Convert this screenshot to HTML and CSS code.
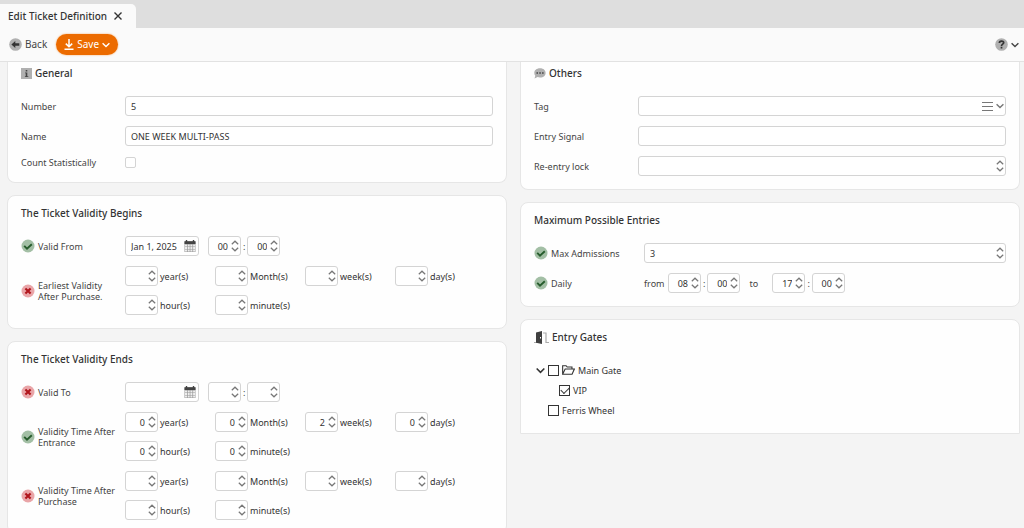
FILE: index.html
```
<!DOCTYPE html>
<html lang="en">

<head>
    <meta charset="UTF-8">
    <meta name="viewport" content="width=device-width, initial-scale=1.0">
    <title>Edit Ticket Definition</title>
    <link rel="stylesheet" href="styles.css">
</head>

<body>
    <!-- Shared icons -->
    <svg class="sprite" aria-hidden="true">
        <symbol id="i-spin" viewBox="0 0 8 12">
            <path d="M.8 4.300 4 1.200l3.200 3.100M.8 7.700 4 10.800l3.200-3.100" fill="none" stroke="#777" stroke-width="1.200" />
        </symbol>
        <symbol id="i-down" viewBox="0 0 8 6">
            <path d="M.6 1.200 4 4.600l3.400-3.400" fill="none" stroke="currentColor" stroke-width="1.400" />
        </symbol>
        <symbol id="i-ok" viewBox="0 0 14 14">
            <circle cx="7" cy="7" r="6.5" fill="#a3bfa5" />
            <path d="M3.2 6.8 6 9.6l4.8-4.4" fill="none" stroke="#265c2c" stroke-width="1.9" />
        </symbol>
        <symbol id="i-no" viewBox="0 0 14 14">
            <circle cx="7" cy="7" r="6.5" fill="#e9a5a8" />
            <path d="m4.4 4.4 5.2 5.2m0-5.2L4.4 9.6" fill="none" stroke="#b0151c" stroke-width="2.1" />
        </symbol>
        <symbol id="i-cal" viewBox="0 0 12 12">
            <path d="M.5 1.500h11V12H.5z" fill="#999" />
            <path d="M.5 1.200h11v2.800H.5z" fill="#444" />
            <path d="M2.5 0v2.4M9.5 0v2.4" stroke="#444" stroke-width="1.4" />
            <path d="M1 4.600h2v1.800H1zM3.700 4.600h2v1.800h-2zM6.400 4.600h2v1.800h-2zM9.100 4.600h2v1.800h-2zM1 7.100h2v1.800H1zM3.700 7.100h2v1.800h-2zM6.400 7.100h2v1.800h-2zM9.100 7.100h2v1.800h-2zM1 9.600h2v1.800H1zM3.700 9.600h2v1.800h-2zM6.400 9.600h2v1.800h-2zM9.100 9.600h2v1.800h-2z" fill="#eee" />
        </symbol>
    </svg>

    <header class="tab-bar">
        <div class="tab">
            <span>Edit Ticket Definition</span>
            <button class="icon-button" aria-label="Close">
                <svg width="8" height="8" viewBox="0 0 8 8"><path d="m.5.5 7 7m0-7-7 7" stroke="#333" stroke-width="1.4" /></svg>
            </button>
        </div>
    </header>

    <nav class="toolbar">
        <button class="back">
            <svg width="13" height="13" viewBox="0 0 13 13"><circle cx="6.5" cy="6.5" r="6.3" fill="#b0b0b0" /><path d="M2.4 6.5 6.3 3v2.3h4v2.4h-4V10z" fill="#333" /></svg>
            Back
        </button>
        <button class="save">
            <svg width="10" height="11" viewBox="0 0 10 11"><path d="M5 0v7.5M1.8 4.6 5 7.8l3.2-3.2M.5 10.2h9" fill="none" stroke="#fff" stroke-width="1.5" /></svg>
            Save
            <svg width="8" height="6"><use href="#i-down" /></svg>
        </button>
        <button class="help" aria-label="Help">
            <svg width="13" height="13" viewBox="0 0 13 13"><circle cx="6.5" cy="6.5" r="6.3" fill="#b0b0b0" /><path d="M4.4 5c0-2.6 4.3-2.5 4.3-.3C8.7 6.2 6.5 6.1 6.5 7.900M6.500 8.800v1.700" fill="none" stroke="#333" stroke-width="1.700" /></svg>
            <svg width="8" height="6"><use href="#i-down" /></svg>
        </button>
    </nav>

    <main class="content">
        <div class="column">
            <section class="panel panel-first">
                <h2>
                    <svg width="11" height="11" viewBox="0 0 11 11"><path d="M0 0h11v11H0z" fill="#b0b0b0" /><path d="M4.7 2h1.600v1.500H4.700zM4 4.500h2.300v3.700h1V9H3.900v-.8h.8V5.300H4z" fill="#444" /></svg>
                    General
                </h2>
                <div class="row">
                    <label class="label" for="number">Number</label>
                    <input class="text" id="number" type="text" value="5">
                </div>
                <div class="row">
                    <label class="label" for="name">Name</label>
                    <input class="text" id="name" type="text" value="ONE WEEK MULTI-PASS">
                </div>
                <div class="row row-check">
                    <label class="label" for="stat">Count Statistically</label>
                    <input class="check" id="stat" type="checkbox">
                </div>
            </section>

            <section class="panel">
                <h2>The Ticket Validity Begins</h2>
                <div class="row">
                    <label class="label" for="from-date"><svg class="state"><use href="#i-ok" /></svg>Valid From</label>
                    <span class="date"><input id="from-date" type="text" value="Jan 1, 2025"><svg width="12" height="12"><use href="#i-cal" /></svg></span>
                    <span class="time">
                        <span class="spin"><input type="text" value="00" aria-label="Hour"><svg><use href="#i-spin" /></svg></span>:<span class="spin"><input type="text" value="00" aria-label="Minute"><svg><use href="#i-spin" /></svg></span>
                    </span>
                </div>
                <div class="row">
                    <span class="label"><svg class="state"><use href="#i-no" /></svg>Earliest Validity<br>After Purchase.</span>
                    <div class="units">
                        <label><span class="spin"><input type="number"><svg><use href="#i-spin" /></svg></span>year(s)</label>
                        <label><span class="spin"><input type="number"><svg><use href="#i-spin" /></svg></span>Month(s)</label>
                        <label><span class="spin"><input type="number"><svg><use href="#i-spin" /></svg></span>week(s)</label>
                        <label><span class="spin"><input type="number"><svg><use href="#i-spin" /></svg></span>day(s)</label>
                        <label><span class="spin"><input type="number"><svg><use href="#i-spin" /></svg></span>hour(s)</label>
                        <label><span class="spin"><input type="number"><svg><use href="#i-spin" /></svg></span>minute(s)</label>
                    </div>
                </div>
            </section>

            <section class="panel">
                <h2>The Ticket Validity Ends</h2>
                <div class="row">
                    <label class="label" for="to-date"><svg class="state"><use href="#i-no" /></svg>Valid To</label>
                    <span class="date"><input id="to-date" type="text"><svg width="12" height="12"><use href="#i-cal" /></svg></span>
                    <span class="time">
                        <span class="spin"><input type="text" aria-label="Hour"><svg><use href="#i-spin" /></svg></span>:<span class="spin"><input type="text" aria-label="Minute"><svg><use href="#i-spin" /></svg></span>
                    </span>
                </div>
                <div class="row">
                    <span class="label"><svg class="state"><use href="#i-ok" /></svg>Validity Time After<br>Entrance</span>
                    <div class="units">
                        <label><span class="spin"><input type="number" value="0"><svg><use href="#i-spin" /></svg></span>year(s)</label>
                        <label><span class="spin"><input type="number" value="0"><svg><use href="#i-spin" /></svg></span>Month(s)</label>
                        <label><span class="spin"><input type="number" value="2"><svg><use href="#i-spin" /></svg></span>week(s)</label>
                        <label><span class="spin"><input type="number" value="0"><svg><use href="#i-spin" /></svg></span>day(s)</label>
                        <label><span class="spin"><input type="number" value="0"><svg><use href="#i-spin" /></svg></span>hour(s)</label>
                        <label><span class="spin"><input type="number" value="0"><svg><use href="#i-spin" /></svg></span>minute(s)</label>
                    </div>
                </div>
                <div class="row">
                    <span class="label"><svg class="state"><use href="#i-no" /></svg>Validity Time After<br>Purchase</span>
                    <div class="units">
                        <label><span class="spin"><input type="number"><svg><use href="#i-spin" /></svg></span>year(s)</label>
                        <label><span class="spin"><input type="number"><svg><use href="#i-spin" /></svg></span>Month(s)</label>
                        <label><span class="spin"><input type="number"><svg><use href="#i-spin" /></svg></span>week(s)</label>
                        <label><span class="spin"><input type="number"><svg><use href="#i-spin" /></svg></span>day(s)</label>
                        <label><span class="spin"><input type="number"><svg><use href="#i-spin" /></svg></span>hour(s)</label>
                        <label><span class="spin"><input type="number"><svg><use href="#i-spin" /></svg></span>minute(s)</label>
                    </div>
                </div>
            </section>
        </div>

        <div class="column">
            <section class="panel panel-first">
                <h2>
                    <svg width="12" height="11" viewBox="0 0 12 11"><path d="M6 .3c7.500 0 7.500 9.200 0 9.200-.9 0-1.700-.1-2.400-.4L.5 10.500l.8-2.700C-1.200 4.500 1 .3 6 .3z" fill="#b0b0b0" /><path d="M2.500 4.200h1.500v1.500H2.500zM5.300 4.200h1.500v1.500H5.300zM8.100 4.200h1.500v1.500H8.100z" fill="#444" /></svg>
                    Others
                </h2>
                <div class="row">
                    <label class="label" for="tag">Tag</label>
                    <span class="field">
                        <input id="tag" type="text">
                        <svg class="list" width="11" height="9" viewBox="0 0 11 9"><path d="M0 .5h11M0 4.500h11M0 8.500h11" stroke="#777" /></svg>
                        <svg width="8" height="6"><use href="#i-down" /></svg>
                    </span>
                </div>
                <div class="row">
                    <label class="label" for="signal">Entry Signal</label>
                    <input class="text" id="signal" type="text">
                </div>
                <div class="row">
                    <label class="label" for="lock">Re-entry lock</label>
                    <span class="field"><input id="lock" type="number"><svg width="8" height="12"><use href="#i-spin" /></svg></span>
                </div>
            </section>

            <section class="panel panel-wide">
                <h2>Maximum Possible Entries</h2>
                <div class="row">
                    <label class="label" for="max"><svg class="state"><use href="#i-ok" /></svg>Max Admissions</label>
                    <span class="field"><input id="max" type="number" value="3"><svg width="8" height="12"><use href="#i-spin" /></svg></span>
                </div>
                <div class="row">
                    <span class="label"><svg class="state"><use href="#i-ok" /></svg>Daily</span>
                    <span class="word">from</span>
                    <span class="time">
                        <span class="spin"><input type="text" value="08" aria-label="From hour"><svg><use href="#i-spin" /></svg></span>:<span class="spin"><input type="text" value="00" aria-label="From minute"><svg><use href="#i-spin" /></svg></span>
                    </span>
                    <span class="word word-to">to</span>
                    <span class="time">
                        <span class="spin"><input type="text" value="17" aria-label="To hour"><svg><use href="#i-spin" /></svg></span>:<span class="spin"><input type="text" value="00" aria-label="To minute"><svg><use href="#i-spin" /></svg></span>
                    </span>
                </div>
            </section>

            <section class="panel panel-gates">
                <h2>
                    <svg width="15" height="13" viewBox="0 0 15 13"><path d="M0 11.500h3M9 2h3v9.500h3" fill="none" stroke="#aaa" stroke-width="1.200" /><path d="M2 1.500 8 0v13l-6-1.200z" fill="#3f3f3f" /><path d="M6 6h1v1.500H6z" fill="#fff" /></svg>
                    Entry Gates
                </h2>
                <ul class="tree">
                    <li>
                        <button class="icon-button" aria-label="Collapse"><svg width="9" height="7"><use href="#i-down" /></svg></button>
                        <label>
                            <input type="checkbox">
                            <svg width="13" height="10" viewBox="0 0 12 9"><path d="M.6 8.400V.6h3.200l1 1.200h4.400v1.800M.6 8.400l2.300-4.800h8.500L9.300 8.400z" fill="none" stroke="#333" /></svg>
                            Main Gate
                        </label>
                    </li>
                    <li class="child"><label><input type="checkbox" checked>VIP</label></li>
                    <li class="leaf"><label><input type="checkbox">Ferris Wheel</label></li>
                </ul>
            </section>
        </div>
    </main>
</body>

</html>
```
FILE: styles.css
```
* {
    box-sizing: border-box;
}

body {
    margin: 0;
    height: 100vh;
    display: flex;
    flex-direction: column;
    overflow: hidden;
    background: #f4f4f4;
    color: #444;
    font: 9px/11px "Noto Sans", "Open Sans", sans-serif;
}

svg {
    flex: none;
    display: block;
}

.sprite {
    position: absolute;
    width: 0;
    height: 0;
}

button,
input {
    font: inherit;
    color: inherit;
}

button {
    display: flex;
    align-items: center;
    padding: 0;
    border: 0;
    background: none;
}

/* Top bars */
.tab-bar {
    flex: none;
    height: 28px;
    padding-top: 4px;
    background: #dedede;
}

.tab {
    display: inline-flex;
    align-items: center;
    gap: 7px;
    height: 24px;
    padding: 0 14px 0 8px;
    border-radius: 0 5px 0 0;
    background: #fafafa;
    color: #333;
    font-size: 10px;
    font-weight: 500;
}

.toolbar {
    flex: none;
    display: flex;
    align-items: center;
    gap: 9px;
    height: 34px;
    padding: 0 5px 0 9px;
    border-bottom: 1px solid #e2e2e2;
    background: #fafafa;
    font-size: 10px;
}

.back {
    gap: 3px;
}

.save {
    gap: 3px;
    height: 21px;
    padding: 0 8px;
    border-radius: 11px;
    background: #ec6b00;
    box-shadow: 0 0 2px #f5a45c;
    color: #fff;
}

.help {
    gap: 3px;
    margin-left: auto;
}

/* Panels */
.content {
    flex: 1;
    display: grid;
    grid-template-columns: 1fr 1fr;
    align-items: start;
    gap: 13px;
    min-height: 0;
    padding: 0 4px 0 7px;
}

.column {
    display: flex;
    flex-direction: column;
    gap: 12px;
}

.panel {
    display: flex;
    flex-direction: column;
    gap: 10px;
    padding: 10px 13px 13px;
    border: 1px solid #e6e6e6;
    border-radius: 8px;
    background: #fefefe;
}

.panel-first {
    padding-top: 4px;
    border-top: 0;
    border-radius: 0 0 8px 8px;
}

h2 {
    display: flex;
    align-items: center;
    gap: 3px;
    height: 14px;
    margin: 0 0 6px;
    color: #333;
    font-size: 10px;
    font-weight: 500;
}

.row {
    display: flex;
    align-items: center;
    min-height: 20px;
}

.row-check {
    min-height: 13px;
}

.label {
    flex: none;
    display: flex;
    align-items: center;
    width: 104px;
    color: #444;
}

.panel-wide .label {
    width: 110px;
}

.state {
    width: 14px;
    height: 14px;
    margin-right: 3px;
}

/* Inputs */
.text,
.field,
.date,
.spin {
    height: 20px;
    border: 1px solid #d4d4d4;
    border-radius: 3px;
    background: #fff;
    color: #333;
}

.text {
    flex: 1;
    min-width: 0;
    padding: 0 5px;
}

.field,
.date,
.spin {
    display: flex;
    align-items: center;
}

.field input,
.date input,
.spin input {
    flex: 1;
    min-width: 0;
    width: 0;
    padding: 0 0 0 5px;
    border: 0;
    outline: 0;
    background: none;
    appearance: textfield;
}

input::-webkit-inner-spin-button {
    display: none;
}

.field {
    flex: 1;
    padding-right: 1px;
    color: #333;
}

.field svg {
    color: #777;
}

.list {
    margin-right: 3px;
}

.date {
    width: 74px;
    margin-right: 9px;
    padding-right: 2px;
}

.spin {
    width: 33px;
    padding-right: 1px;
}

.spin input {
    padding: 0 3px 0 0;
    text-align: right;
}

.spin svg {
    width: 8px;
    height: 12px;
}

.time {
    display: flex;
    align-items: center;
    gap: 2px;
}

.units {
    display: grid;
    grid-template-columns: repeat(4, 90px);
    row-gap: 9px;
}

.units label {
    display: flex;
    align-items: center;
    gap: 2px;
    color: #333;
}

.word {
    width: 24px;
}

.word-to {
    width: 32px;
    padding-left: 9px;
}

.check {
    appearance: none;
    width: 11px;
    height: 11px;
    margin: 0;
    border: 1px solid #d4d4d4;
    border-radius: 2px;
    background: #fff;
}

/* Entry gates */
.panel-gates {
    border-radius: 8px 8px 0 0;
}

.tree {
    margin: 0;
    padding: 0 0 0 2px;
    list-style: none;
    color: #333;
}

.tree li,
.tree label {
    display: flex;
    align-items: center;
    gap: 3px;
    height: 20px;
}

.tree .child {
    padding-left: 23px;
}

.tree .leaf {
    padding-left: 12px;
}

.tree input {
    appearance: none;
    display: grid;
    place-items: center;
    width: 11px;
    height: 11px;
    margin: 0;
    border: 1px solid #333;
}

.tree input:checked::after {
    content: "";
    width: 7px;
    height: 4px;
    border: solid #333;
    border-width: 0 0 1px 1px;
    transform: translateY(-1px) rotate(-45deg);
}
```
